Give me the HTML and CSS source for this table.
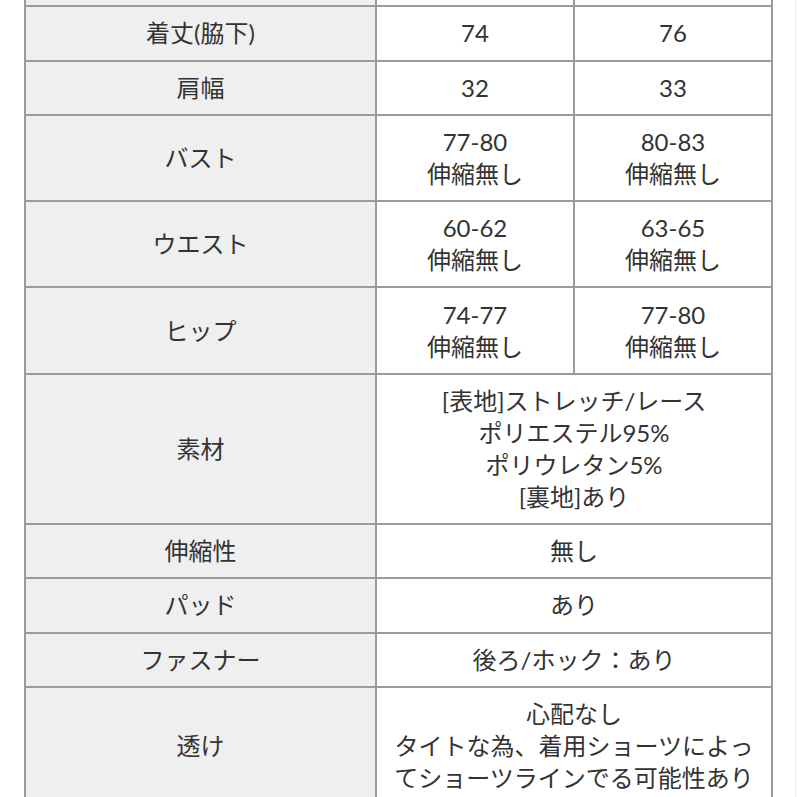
FILE: index.html
```html
<!DOCTYPE html>
<html lang="ja">
<head>
<meta charset="utf-8">
<title>サイズ表</title>
<link rel="stylesheet" href="styles.css">
</head>
<body>
<div class="page">
  <table class="spec">
    <colgroup>
      <col class="c-label">
      <col class="c-val">
      <col class="c-val">
    </colgroup>
    <tbody>
      <tr><th>&nbsp;</th><td>&nbsp;</td><td>&nbsp;</td></tr>
      <tr><th>着丈(脇下)</th><td>74</td><td>76</td></tr>
      <tr><th>肩幅</th><td>32</td><td>33</td></tr>
      <tr><th>バスト</th><td>77-80<br>伸縮無し</td><td>80-83<br>伸縮無し</td></tr>
      <tr><th>ウエスト</th><td>60-62<br>伸縮無し</td><td>63-65<br>伸縮無し</td></tr>
      <tr><th>ヒップ</th><td>74-77<br>伸縮無し</td><td>77-80<br>伸縮無し</td></tr>
      <tr><th>素材</th><td colspan="2">[表地]ストレッチ/レース<br>ポリエステル95%<br>ポリウレタン5%<br>[裏地]あり</td></tr>
      <tr><th>伸縮性</th><td colspan="2">無し</td></tr>
      <tr><th>パッド</th><td colspan="2">あり</td></tr>
      <tr><th>ファスナー</th><td colspan="2">後ろ/ホック：あり</td></tr>
      <tr><th>透け</th><td colspan="2">心配なし<br>タイトな為、着用ショーツによっ<br>てショーツラインでる可能性あり</td></tr>
    </tbody>
  </table>
</div>
</body>
</html>
```
FILE: styles.css
```css
html, body {
  margin: 0;
  padding: 0;
  background: #ffffff;
}
body {
  font-family: "Lato", "Noto Sans CJK JP", sans-serif;
  color: #333333;
  overflow: hidden;
}
.page {
  width: 795px;
  height: 797px;
  border-right: 1px solid #ececec;
  overflow: hidden;
}
.spec {
  margin-top: -49px;
  margin-left: 24px;
  width: 749px;
  table-layout: fixed;
  border-collapse: collapse;
  font-size: 24px;
  line-height: 32px;
}
.c-label { width: 351px; }
.c-val { width: 198px; }
.spec th,
.spec td {
  border: 2px solid #9b9b9b;
  padding: 10.15px 0;
  text-align: center;
  vertical-align: middle;
  font-weight: 400;
  white-space: nowrap;
}
.spec th {
  background: #efefef;
}
.spec td {
  background: #ffffff;
}
```
